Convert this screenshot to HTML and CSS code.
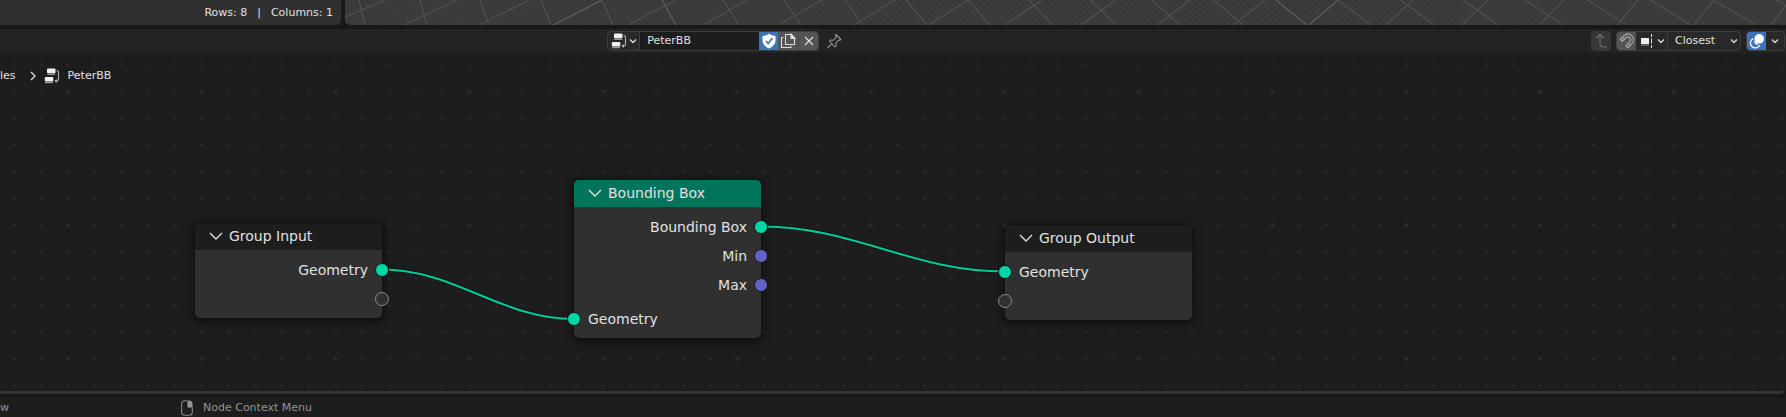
FILE: index.html
```html
<!DOCTYPE html>
<html lang="en">
<head>
<meta charset="utf-8">
<title>Geometry Nodes</title>
<link rel="stylesheet" href="styles.css">
</head>
<body>
<div class="top-areas">
  <div class="spreadsheet-footer"><span>Rows: 8</span><span>|</span><span>Columns: 1</span></div>
  <div class="viewport"><svg class="floor" id="floor" aria-hidden="true"></svg></div>
</div>

<main class="node-editor">
  <header class="editor-header">
    <div class="group tree-group">
      <button class="cell menu-cell" aria-label="Browse node tree">
        <svg class="icon" viewBox="0 0 16 16"><use href="#nodetree"/></svg>
        <svg class="chev" viewBox="0 0 8 8"><path d="M1 2.500l3 3 3-3"/></svg>
      </button>
      <input class="tree-name" type="text" value="PeterBB" aria-label="Node tree name">
      <button class="cell active" aria-label="Fake user">
        <svg class="icon" viewBox="0 0 16 16"><path fill="#fff" d="M8 .8C6.500 2 4 2.800 1.500 2.900V7.500c0 3.500 2.500 6 6.500 8 4-2 6.500-4.500 6.500-8V2.900C12 2.800 9.500 2 8 .8z"/><path d="M5 8l2.200 2.500L11.500 5" fill="none" stroke="#3f72b8" stroke-width="1.700"/></svg>
      </button>
      <button class="cell raised" aria-label="New node tree">
        <svg class="icon" viewBox="0 0 16 16" fill="none" stroke="#d9d9d9" stroke-width="1.100"><path d="M5.500 1.500H11l3.500 3.500v6.500h-9z"/><path d="M11 1v4.500h4z" fill="#e6e6e6"/><path d="M3.500 4.500h-2v10h9.500v-1.500"/></svg>
      </button>
      <button class="cell raised" aria-label="Unlink">
        <svg class="icon" viewBox="0 0 16 16" fill="none" stroke="#e0e0e0" stroke-width="1.200"><path d="M4 4l8 8M12 4l-8 8"/></svg>
      </button>
    </div>
    <button class="pin" aria-label="Pin">
      <svg class="icon" viewBox="0 0 16 16" fill="none" stroke="#8f8f8f" stroke-width="1.100" stroke-linejoin="round"><path d="M10 1.500l5 5-1.200.7-1-.2-2.800 2.800.2 3-1.200 1L3.500 8.200l1-1.200 3 .2L10.200 4.200 9.500 2.500zM6 10.500L1.500 15"/></svg>
    </button>
    <div class="header-right">
      <button class="parent-button" aria-label="Parent node tree" disabled>
        <svg class="icon" viewBox="0 0 16 16" fill="none" stroke="#707070" stroke-width="1.100"><path d="M3 5.500l4-4 4 4M7 1.500v9.500q0 3 3 3h4"/></svg>
      </button>
      <div class="group">
        <button class="cell raised snap-cell" aria-label="Snap">
          <svg class="icon" viewBox="0 0 16 16" fill="none" stroke="#a8a8a8" stroke-width="1.200" stroke-linejoin="round"><path d="M1.200 6.200L5 2.600C7.500.5 10.500.5 12.700 2.700s2.400 5.600.1 8L9 14.800l-2-2 3.800-4.100c1.200-1.300 1.100-2.800.1-3.900s-2.800-1.100-4-.1L3.200 8.300zM5.200 6.400l-2-2M9 10.600l2 2"/></svg>
        </button>
        <button class="cell menu-cell" aria-label="Snap target">
          <svg class="icon" viewBox="0 0 16 16"><path d="M2 5h8v6H2z" fill="#eee"/><path d="M2 12h8" stroke="#999"/><path d="M12.500 1v3M12.500 5.500v5M12.500 12v3" stroke="#ddd"/></svg>
          <svg class="chev" viewBox="0 0 8 8"><path d="M1 2.500l3 3 3-3"/></svg>
        </button>
        <label class="select-wrap">
          <select class="snap-select" aria-label="Snap base"><option>Closest</option></select>
          <svg class="chev" viewBox="0 0 8 8"><path d="M1 2.500l3 3 3-3"/></svg>
        </label>
      </div>
      <div class="group">
        <button class="cell active" aria-label="Show overlays">
          <svg class="icon" viewBox="0 0 16 16"><circle cx="10.200" cy="5.800" r="4.800" fill="#fff"/><path d="M4.200 5.600A4.900 4.900 0 1 0 10.800 12M5.300 8.500a5 5 0 0 0 3.500 3" fill="none" stroke="#fff" stroke-width="1.300"/></svg>
        </button>
        <button class="cell narrow-cell" aria-label="Overlay options"><svg class="chev" viewBox="0 0 8 8"><path d="M1 2.500l3 3 3-3"/></svg></button>
      </div>
    </div>
  </header>

  <div class="canvas">
    <svg class="backdrop" aria-hidden="true">
      <defs>
        <pattern id="dots" x="0.900" y="-2" width="26.770" height="26.770" patternUnits="userSpaceOnUse"><rect x="11.900" y="11.900" width="3" height="3" fill="#262626"/></pattern>
        <pattern id="bright-dots" x="0.900" y="-2" width="133.850" height="133.850" patternUnits="userSpaceOnUse"><rect x="65.400" y="38.700" width="3" height="3" fill="#2c2c2c"/></pattern>
        <symbol id="nodetree" viewBox="0 0 16 16"><rect x="3" y=".5" width="8.500" height="4.800" rx="1" fill="#f0f0f0"/><path d="M3.300 6.300h7.900" stroke="#9a9a9a" stroke-width="1.400"/><rect x=".8" y="9" width="8.500" height="4.500" rx="1" fill="#f0f0f0"/><path d="M1 14.500h8" stroke="#9a9a9a" stroke-width="1.400"/><path d="M12.500 2.500q2 0 2 2v7q0 1.500-2 1.500H11" fill="none" stroke="#b5b5b5" stroke-width="1.100"/><path d="M12.800 11L10.300 13l2.500 2z" fill="#b5b5b5"/></symbol>
      </defs>
      <rect width="100%" height="100%" fill="url(#dots)"/>
      <rect width="100%" height="100%" fill="url(#bright-dots)"/>
      <g class="link-shadow"><path d="M382 216.500C455 216.500 501 266 574 266"/><path d="M761 173.500C854 173.500 912 218.500 1005 218.500"/></g>
      <g class="link"><path d="M382 216.500C455 216.500 501 266 574 266"/><path d="M761 173.500C854 173.500 912 218.500 1005 218.500"/></g>
    </svg>

    <nav class="breadcrumb" aria-label="Context path">
      <span class="crumb">les</span>
      <svg class="crumb-arrow" viewBox="0 0 6 10"><path d="M1 1l4 4-4 4"/></svg>
      <svg class="icon" viewBox="0 0 16 16"><use href="#nodetree"/></svg>
      <span>PeterBB</span>
    </nav>

    <section class="node group-input">
      <h2 class="node-title"><svg class="fold" viewBox="0 0 14 8"><path d="M1 1l6 6 6-6"/></svg>Group Input</h2>
      <div class="row output">Geometry<i class="socket geo"></i></div>
      <div class="row output"><i class="socket empty"></i></div>
    </section>
    <section class="node bounding-box">
      <h2 class="node-title teal"><svg class="fold" viewBox="0 0 14 8"><path d="M1 1l6 6 6-6"/></svg>Bounding Box</h2>
      <div class="row output">Bounding Box<i class="socket geo"></i></div>
      <div class="row output">Min<i class="socket vector"></i></div>
      <div class="row output">Max<i class="socket vector"></i></div>
      <div class="row input spaced">Geometry<i class="socket geo"></i></div>
    </section>
    <section class="node group-output">
      <h2 class="node-title"><svg class="fold" viewBox="0 0 14 8"><path d="M1 1l6 6 6-6"/></svg>Group Output</h2>
      <div class="row input">Geometry<i class="socket geo"></i></div>
      <div class="row input"><i class="socket empty"></i></div>
    </section>
  </div>
  <div class="scroll-edge"></div>
</main>

<footer class="status-bar">
  <span class="status-hint">w</span>
  <svg class="mouse" viewBox="0 0 12 16"><path d="M6 .7H4Q.7.700.7 4v8Q.7 15.300 4 15.300h4q3.300 0 3.300-3.300V7.500" fill="none" stroke="#8c8c8c" stroke-width="1.100"/><path d="M6.500.5H8q3.500 0 3.500 3.500v3.500h-5z" fill="#999"/></svg>
  <span>Node Context Menu</span>
</footer>
<script src="floor.js"></script>
</body>
</html>
```
FILE: styles.css
```css
* { box-sizing: border-box; }

body {
  margin: 0;
  min-height: 100vh;
  display: flex;
  flex-direction: column;
  background: #181818;
  color: #e0e0e0;
  font: 11px/16px "DejaVu Sans", sans-serif;
  overflow: hidden;
}

button, input, select {
  margin: 0;
  padding: 0;
  border: 0;
  border-radius: 0;
  background: none;
  color: inherit;
  font: inherit;
}

.icon { width: 16px; height: 16px; flex: none; }
.chev { width: 8px; height: 8px; flex: none; fill: none; stroke: #d8d8d8; stroke-width: 1.4; }

/* Areas above the node editor */
.top-areas { display: flex; gap: 4px; height: 25px; }
.spreadsheet-footer {
  display: flex;
  justify-content: flex-end;
  gap: 10px;
  width: 341px;
  padding: 5px 8px 0 0;
  background: #303030;
  border-bottom-right-radius: 5px;
}
.viewport { flex: 1; overflow: hidden; background: #393939; border-bottom-left-radius: 5px; }
.floor { display: block; width: 100%; height: 25px; }
.floor .fine { stroke: #3e3e3e; stroke-width: 1; }
.floor .major { stroke: #505050; stroke-width: 1.2; }
.floor .strong { stroke: #5c5c5c; stroke-width: 1.4; }

/* Node editor */
.node-editor { flex: 1; display: flex; flex-direction: column; margin-top: 4px; }
.editor-header {
  display: flex;
  align-items: center;
  height: 24px;
  padding: 0 1px 0 34%;
  background: #232323;
}
.group {
  display: flex;
  height: 20px;
  border: 1px solid #3d3d3d;
  border-radius: 4px;
  background: #282828;
  overflow: hidden;
}
.cell { display: flex; align-items: center; justify-content: center; width: 20px; height: 18px; }
.menu-cell { width: 32px; gap: 2px; border-right: 1px solid #3d3d3d; }
.narrow-cell { width: 18px; }
.active { width: 19px; background: #3f72b8; }
.raised { background: #545454; }
.raised + .raised { border-left: 1px solid #464646; }
.snap-cell { width: 19px; }
.tree-name { width: 119px; padding: 0 0 0 7px; background: #1d1d1d; outline: none; }
.pin { display: flex; margin-left: 7px; }
.header-right { display: flex; gap: 5px; margin-left: auto; }
.parent-button {
  display: flex;
  align-items: center;
  justify-content: center;
  width: 20px;
  height: 20px;
  border-radius: 4px;
  background: #373737;
}
.select-wrap { display: flex; align-items: center; width: 72px; padding-right: 2px; }
.snap-select { flex: 1; height: 18px; padding: 0 0 0 7px; appearance: none; outline: none; }

.canvas { position: relative; flex: 1; background: #1d1d1d; overflow: hidden; }
.backdrop { position: absolute; inset: 0; width: 100%; height: 100%; }
.link-shadow path { fill: none; stroke: #141414; stroke-width: 4; }
.link path { fill: none; stroke: #00cb9a; stroke-width: 2; }

.breadcrumb { position: relative; display: flex; align-items: center; padding-top: 15px; }
.breadcrumb .icon { margin: 0 8px; }
.crumb { margin-right: 14px; }
.crumb-arrow { width: 6px; height: 10px; fill: none; stroke: #e0e0e0; stroke-width: 1.3; }

.node {
  position: absolute;
  width: 187px;
  padding-bottom: 5px;
  border-radius: 5px;
  background: #303030;
  box-shadow: 0 0 0 1px #121212, 0 2px 8px 2px rgba(0, 0, 0, 0.5);
  font-size: 14px;
}
.group-input { left: 195px; top: 170px; }
.bounding-box { left: 574px; top: 127px; }
.group-output { left: 1005px; top: 172px; }
.node-title {
  display: flex;
  align-items: center;
  gap: 6px;
  height: 27px;
  margin: 0 0 5px;
  padding: 0 14px 1px;
  border-radius: 5px 5px 0 0;
  background: #1d1d1d;
  font-size: 14px;
  font-weight: 400;
}
.teal { background: #00755c; }
.fold { width: 14px; height: 8px; fill: none; stroke: #e0e0e0; stroke-width: 1.4; }
.row { position: relative; display: flex; align-items: center; height: 29px; padding: 0 14px; }
.output { justify-content: flex-end; }
.spaced { margin-top: 5px; }
.socket {
  position: absolute;
  top: 8px;
  width: 14px;
  height: 14px;
  border: 1px solid #151515;
  border-radius: 50%;
}
.output .socket { right: -7px; }
.input .socket { left: -7px; }
.geo { background: #00d6a3; }
.vector { background: #6363c7; }
.empty { border-color: #8a8a8a; background: #303030; }

.scroll-edge { height: 3px; margin-right: 2px; background: #333333; border-bottom-right-radius: 3px; }

/* Status bar */
.status-bar {
  display: flex;
  align-items: center;
  height: 19px;
  margin-top: 4px;
  background: #1d1d1d;
  color: #939393;
}
.status-hint { width: 8px; margin-right: 173px; }
.mouse { width: 12px; height: 16px; margin-right: 10px; }
```
FILE: floor.js
```js
// Perspective floor grid: each pair is the x of a line at the top and at the bottom edge.
const ORIGIN = 345;
const HEIGHT = 25;
const falling = [[298, 303], [359, 365], [420, 427], [480, 489], [541, 551], [602, 613], [662, 676], [723, 739], [784, 801], [845, 863], [906, 927], [968, 990], [1029, 1053], [1090, 1116], [1152, 1180], [1214, 1243], [1276, 1307], [1338, 1371], [1401, 1434], [1463, 1498], [1525, 1563], [1587, 1627], [1650, 1691], [1713, 1756], [1776, 1820]];
const rising = [[310, 255], [385, 327], [457, 404], [530, 479], [602, 553], [676, 628], [748, 703], [822, 778], [895, 854], [968, 929], [1042, 1005], [1116, 1081], [1190, 1157], [1265, 1233], [1338, 1309], [1413, 1386], [1488, 1462], [1564, 1539], [1638, 1617], [1714, 1694], [1790, 1771], [1866, 1848]];
const floor = document.getElementById("floor");

function line(top, bottom, kind) {
  const el = document.createElementNS("http://www.w3.org/2000/svg", "line");
  el.setAttribute("x1", top - ORIGIN);
  el.setAttribute("y1", 0);
  el.setAttribute("x2", bottom - ORIGIN);
  el.setAttribute("y2", HEIGHT);
  el.setAttribute("class", kind);
  floor.appendChild(el);
}

for (const set of [falling, rising]) {
  for (let i = 0; i < set.length - 1; i++) {
    for (let k = 1; k < 10; k++) {
      const mix = (n) => set[i][n] + (set[i + 1][n] - set[i][n]) * k / 10;
      line(mix(0), mix(1), "fine");
    }
  }
}
falling.forEach(([t, b], i) => line(t, b, i % 10 === 6 ? "strong" : "major"));
rising.forEach(([t, b], i) => line(t, b, i % 10 === 4 ? "strong" : "major"));
```
